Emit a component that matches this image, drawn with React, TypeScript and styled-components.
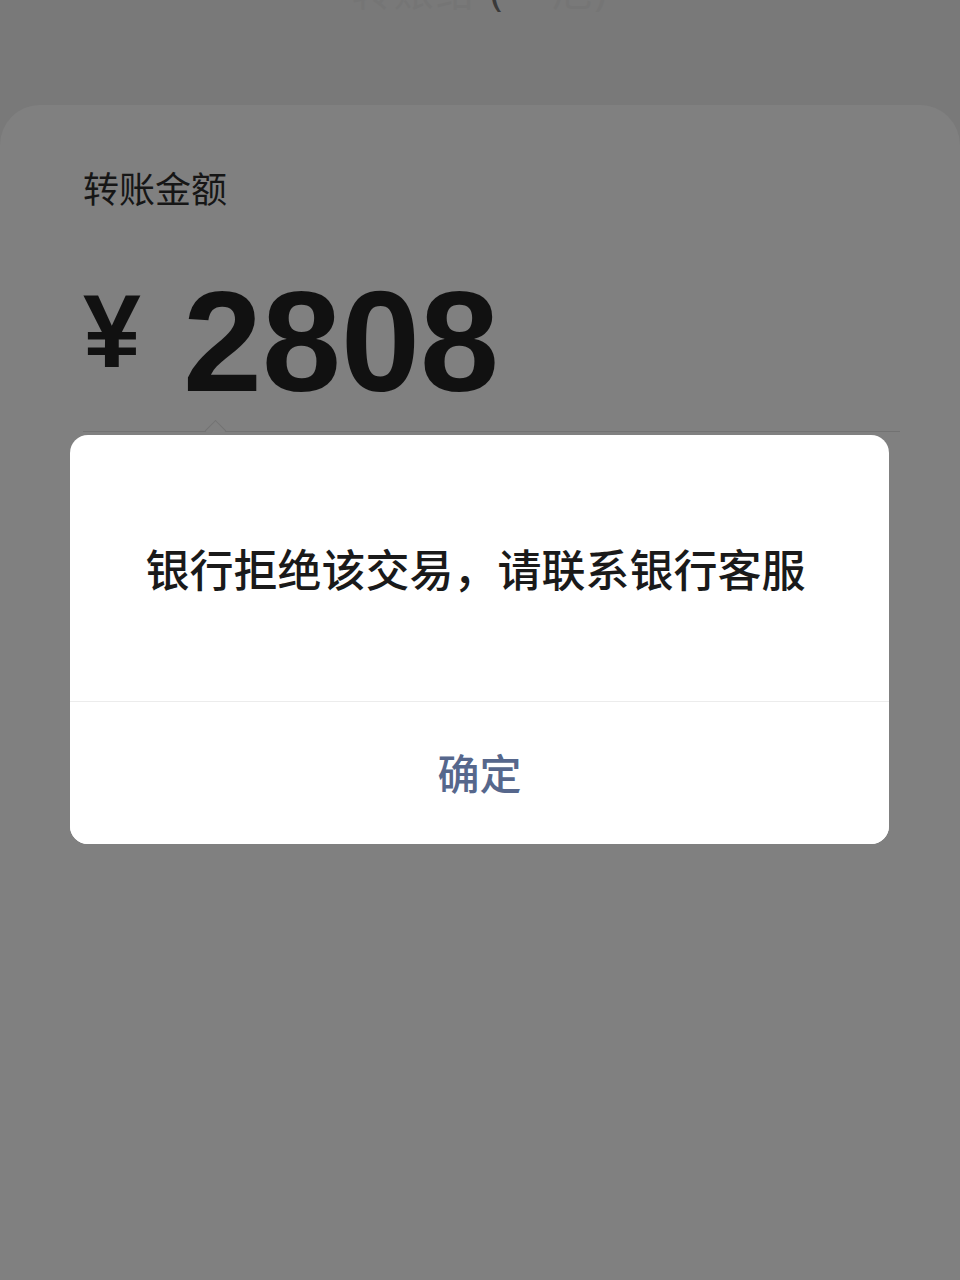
import React from 'react';
import styled, { createGlobalStyle } from 'styled-components';

const GlobalStyle = createGlobalStyle`
  html, body {
    margin: 0;
    padding: 0;
    background: #797979;
  }
  body {
    font-family: "Noto Sans", "Noto Sans CJK SC", sans-serif;
  }
`;

const Page = styled.div`
  position: relative;
  width: 960px;
  height: 1280px;
  overflow: hidden;
  background: #797979;
  display: flex;
  flex-direction: column;
`;

const TopTitle = styled.div`
  height: 105px;
  display: flex;
  justify-content: center;
  align-items: flex-start;
  overflow: hidden;
`;

const TitleText = styled.div`
  margin-top: -34px;
  font-size: 40px;
  line-height: 50px;
  color: #757575;
  letter-spacing: 2px;

  span {
    color: #3a3a3a;
  }
`;

const Card = styled.section`
  flex: 1;
  background: #808080;
  border-radius: 40px 40px 0 0;
  padding: 60px 0 0 83px;
`;

const Label = styled.div`
  font-size: 36px;
  line-height: 44px;
  color: #161616;
  font-family: "Noto Sans CJK SC", sans-serif;
`;

const AmountRow = styled.div`
  display: flex;
  align-items: flex-start;
  margin-top: 62px;
  height: 160px;
`;

const Yen = styled.div`
  font-family: "Liberation Sans", sans-serif;
  font-weight: 700;
  font-size: 104px;
  line-height: 104px;
  color: #111;
  margin-top: 8px;
  width: 100px;
`;

const Amount = styled.div`
  font-family: "Liberation Sans", sans-serif;
  font-weight: 700;
  font-size: 142px;
  line-height: 142px;
  letter-spacing: 0;
  color: #111;
`;

const Underline = styled.div`
  position: relative;
  height: 1px;
  margin-right: 60px;
  background: #727272;
`;

const Caret = styled.div`
  position: absolute;
  left: 125px;
  top: -8px;
  width: 14px;
  height: 14px;
  background: #808080;
  border-left: 1px solid #727272;
  border-top: 1px solid #727272;
  transform: rotate(45deg);
`;

const Dialog = styled.div`
  position: absolute;
  left: 70px;
  top: 435px;
  width: 819px;
  height: 409px;
  background: #fff;
  border-radius: 18px;
  display: flex;
  flex-direction: column;
  overflow: hidden;
`;

const Message = styled.div`
  height: 267px;
  display: flex;
  align-items: center;
  justify-content: center;
  font-family: "Noto Sans CJK SC", sans-serif;
  font-weight: 500;
  font-size: 44px;
  color: #1a1a1a;
  padding: 0 8px 0 0;
  box-sizing: border-box;
  border-bottom: 1px solid #ececec;
`;

const ConfirmButton = styled.button`
  flex: 1;
  border: none;
  background: #fff;
  font-family: "Noto Sans CJK SC", sans-serif;
  font-weight: 500;
  font-size: 42px;
  color: #56678c;
  padding: 0 0 4px;
  cursor: pointer;
`;

const App: React.FC = () => {
  return (
    <>
      <GlobalStyle />
      <Page>
        <TopTitle>
          <TitleText>
            转账给 <span>(</span>**旭)
          </TitleText>
        </TopTitle>
        <Card>
          <Label>转账金额</Label>
          <AmountRow>
            <Yen>¥</Yen>
            <Amount>2808</Amount>
          </AmountRow>
          <Underline>
            <Caret />
          </Underline>
        </Card>
        <Dialog>
          <Message>银行拒绝该交易，请联系银行客服</Message>
          <ConfirmButton>确定</ConfirmButton>
        </Dialog>
      </Page>
    </>
  );
};

export default App;
